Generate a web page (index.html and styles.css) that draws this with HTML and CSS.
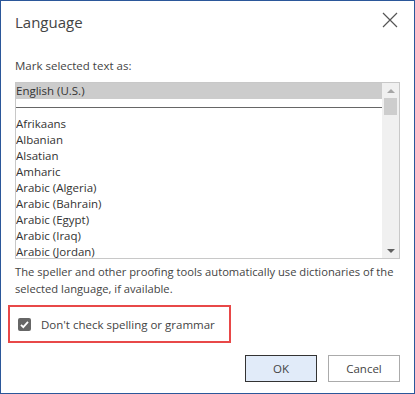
FILE: index.html
```html
<!DOCTYPE html>
<html>
<head>
<meta charset="utf-8">
<link rel="stylesheet" href="styles.css">
</head>
<body>
<div class="dialog">
  <div class="titlebar">
    <span class="title">Language</span>
    <svg class="close" width="16" height="16" viewBox="0 0 16 16"><path d="M1 1 L15 15 M15 1 L1 15" stroke="#555" stroke-width="1.2" fill="none"/></svg>
  </div>
  <div class="label">Mark selected text as:</div>
  <div class="listbox">
    <div class="items">
      <div class="item selected">English (U.S.)</div>
      <div class="sep"></div>
      <div class="item">Afrikaans</div>
      <div class="item">Albanian</div>
      <div class="item">Alsatian</div>
      <div class="item">Amharic</div>
      <div class="item">Arabic (Algeria)</div>
      <div class="item">Arabic (Bahrain)</div>
      <div class="item">Arabic (Egypt)</div>
      <div class="item">Arabic (Iraq)</div>
      <div class="item">Arabic (Jordan)</div>
    </div>
    <div class="scrollbar">
      <svg class="arrow" width="16" height="14" viewBox="0 0 16 14"><path d="M4 9 L8 5 L12 9 Z" fill="#a6a6a6"/></svg>
      <div class="thumb"></div>
      <div class="track"></div>
      <svg class="arrow" width="16" height="14" viewBox="0 0 16 14"><path d="M4 5 L8 9 L12 5 Z" fill="#606060"/></svg>
    </div>
  </div>
  <p class="note">The speller and other proofing tools automatically use dictionaries of the selected language, if available.</p>
  <div class="highlight">
    <span class="checkbox"><svg width="13" height="13" viewBox="0 0 13 13"><path d="M3 6.8 L5.3 9.2 L10 3.8" stroke="#fff" stroke-width="1.8" fill="none"/></svg></span>
    <span class="cblabel">Don't check spelling or grammar</span>
  </div>
  <div class="buttons">
    <button class="btn primary">OK</button>
    <button class="btn">Cancel</button>
  </div>
</div>
</body>
</html>
```
FILE: styles.css
```css
* { box-sizing: border-box; }
html, body { margin: 0; padding: 0; background: #fff; }
body { font-family: "Open Sans", "Noto Sans", sans-serif; color: #444; }
.dialog {
  width: 415px;
  height: 394px;
  border: 1px solid #2b579a;
  padding: 0 14px 0 14px;
  display: flex;
  flex-direction: column;
}
.titlebar {
  display: flex;
  justify-content: space-between;
  align-items: center;
  height: 40px;
  padding-top: 2px;
}
.title { font-size: 15px; color: #444; }
.close { margin-right: 2px; margin-bottom: 4px; }
.label { font-size: 11.5px; margin-top: 17px; line-height: 16px; color: #444; }
.listbox {
  margin-top: 8px;
  height: 177px;
  border: 1px solid #c8c8c8;
  display: flex;
}
.items { flex: 1; font-size: 11.5px; color: #333; overflow: hidden; }
.item { height: 16px; line-height: 15px; white-space: nowrap; }
.item.selected { background: #cccccc; line-height: 16px; }
.sep { height: 9px; border-bottom: 1px solid #666; margin-bottom: 8px; }
.scrollbar {
  width: 17px;
  background: #f0f0f0;
  display: flex;
  flex-direction: column;
  align-items: center;
  padding-top: 1px;
}
.arrow { display: block; flex: none; }
.thumb { width: 13px; height: 17px; background: #cdcdcd; flex: none; }
.track { flex: 1; }
.note { font-size: 11.2px; line-height: 17px; margin: 4px -2px 0 0; color: #444; }
.highlight {
  margin: 8px 0 0 -7px;
  width: 223px;
  height: 38px;
  border: 2px solid #e84848;
  display: flex;
  align-items: center;
  padding-left: 8px;
}
.checkbox {
  width: 13px; height: 13px;
  background: #666;
  border-radius: 2px;
  display: inline-flex;
  margin-right: 10px;
}
.checkbox svg { display: block; }
.cblabel { font-size: 11.5px; color: #444; }
.buttons {
  display: flex;
  justify-content: flex-end;
  gap: 11px;
  margin-top: 12px;
}
.btn {
  width: 72px;
  height: 27px;
  font-family: inherit;
  font-size: 11.5px;
  color: #444;
  background: #fff;
  border: 1px solid #ababab;
  border-radius: 0;
  padding: 0;
}
.btn.primary { background: #e1ebf9; border-color: #333; }
```
